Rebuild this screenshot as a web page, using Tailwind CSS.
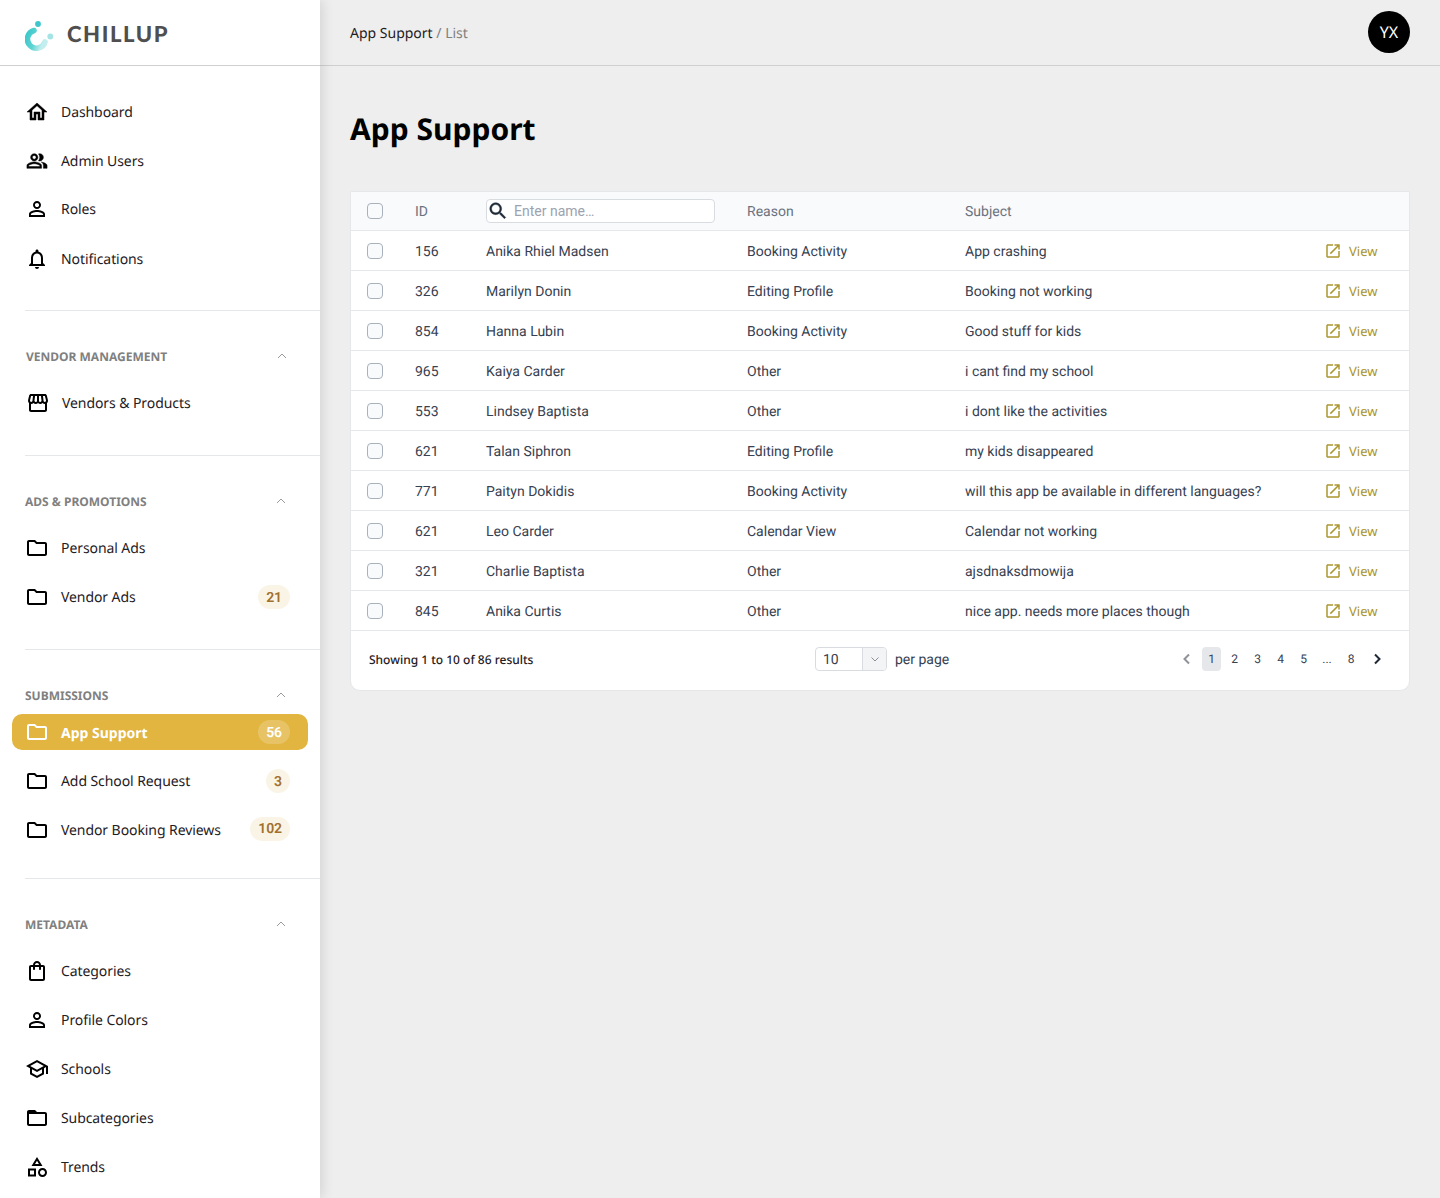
<!doctype html>
<html>
<head>
<meta charset="utf-8">
<script src="https://cdn.jsdelivr.net/npm/@tailwindcss/browser@4"></script>
<title>App Support</title>
</head>
<body class="bg-[#eeeeee] font-['Noto_Sans',sans-serif] [text-rendering:geometricPrecision]">
<div class="flex h-[1198px] w-[1440px] overflow-hidden">
<aside class="relative z-10 h-[1198px] w-[320px] shrink-0 bg-white shadow-[2px_0_12px_rgba(0,0,0,0.12)]">
  <div class="flex h-[66px] items-center border-b border-[#cfcfcf] pl-[25px]">
    <svg class="mt-[6px] h-[30px] w-[30px] shrink-0" viewBox="0 0 30 30">
      <defs><linearGradient id="lg" x1="0" y1="0" x2="1" y2="0.4"><stop offset="0" stop-color="#3cc8cb"/><stop offset="0.55" stop-color="#5fd3d3"/><stop offset="1" stop-color="#c4eeee"/></linearGradient></defs>
      <path d="M9 9.5 A 9 9 0 1 0 20 21" fill="none" stroke="url(#lg)" stroke-width="5.6" stroke-linecap="round"/>
      <circle cx="13" cy="3" r="2.9" fill="#3fc6cc"/>
      <circle cx="25.3" cy="15.5" r="2.9" fill="#a5e4e4"/>
    </svg>
    <span class="ml-[12px] mt-[2px] font-['Lato',sans-serif] text-[22px] font-black tracking-[1.6px] text-[#4f4f4f]">CHILLUP</span>
  </div>

  <nav class="pt-[21px] text-[14px] tracking-[-0.08px] text-[#1f2024] [&_a>span:nth-of-type(1)]:mt-[2px]">
    <a class="flex h-[49px] items-center pl-[25px]"><svg class="h-6 w-6 shrink-0 fill-black stroke-black stroke-[0.5]" viewBox="0 0 24 24"><path d="M12 5.69l5 4.5V18h-2v-6H9v6H7v-7.81l5-4.5M12 3L2 12h3v8h6v-6h2v6h6v-8h3L12 3z"/></svg><span class="ml-3">Dashboard</span></a>
    <a class="flex h-[49px] items-center pl-[26px]"><svg class="h-[22px] w-[22px] shrink-0 fill-black stroke-black stroke-[0.5]" viewBox="0 0 24 24"><path d="M16.67 13.13C18.04 14.06 19 15.32 19 17v3h4v-3c0-2.18-3.57-3.47-6.33-3.87zM15 12c2.21 0 4-1.79 4-4s-1.79-4-4-4c-.47 0-.91.1-1.33.26C14.5 5.27 15 6.58 15 8s-.5 2.73-1.33 3.74c.42.16.86.26 1.33.26zM9 12c2.21 0 4-1.79 4-4s-1.79-4-4-4-4 1.79-4 4 1.79 4 4 4zm0-6c1.1 0 2 .9 2 2s-.9 2-2 2-2-.9-2-2 .9-2 2-2zM9 13c-2.67 0-8 1.34-8 4v3h16v-3c0-2.66-5.33-4-8-4zm6 5H3v-.99C3.2 16.29 6.3 15 9 15s5.8 1.29 6 2v1z"/></svg><span class="ml-[13px]">Admin Users</span></a>
    <a class="flex h-[49px] items-center pb-[2px] pl-[25px]"><svg class="h-6 w-6 shrink-0 fill-black" viewBox="0 0 24 24"><path d="M12 5.9c1.16 0 2.1.94 2.1 2.1s-.94 2.1-2.1 2.1S9.9 9.16 9.9 8s.94-2.1 2.1-2.1m0 9c2.97 0 6.1 1.46 6.1 2.1v1.1H5.9V17c0-.64 3.13-2.1 6.1-2.1M12 4C9.79 4 8 5.79 8 8s1.79 4 4 4 4-1.79 4-4-1.79-4-4-4zm0 9c-2.67 0-8 1.34-8 4v3h16v-3c0-2.66-5.33-4-8-4z"/></svg><span class="ml-3">Roles</span></a>
    <a class="flex h-[49px] items-center pl-[25px]"><svg class="h-6 w-6 shrink-0 fill-black" viewBox="0 0 24 24"><path d="M12 22c1.1 0 2-.9 2-2h-4c0 1.1.9 2 2 2zm6-6v-5c0-3.07-1.63-5.64-4.5-6.32V4c0-.83-.67-1.5-1.5-1.5s-1.5.67-1.5 1.5v.68C7.64 5.36 6 7.92 6 11v5l-2 2v1h16v-1l-2-2zm-2 1H8v-6c0-2.48 1.51-4.5 4-4.5s4 2.02 4 4.5v6z"/></svg><span class="ml-3">Notifications</span></a>

    <div class="ml-[25px] mt-[27px] border-t border-[#e5e7eb]"></div>

    <div class="mt-[35px] flex h-5 items-center justify-between pl-[26px] pr-[32px]"><span class="mt-[2px] text-[12px] font-bold uppercase tracking-normal text-[#808080]">Vendor Management</span><svg class="h-3 w-3" viewBox="0 0 12 12" fill="none" stroke="#9a9a9a" stroke-width="1"><path d="M2 8l4-4 4 4"/></svg></div>
    <a class="mt-3 flex h-[49px] items-center pl-[26px]"><svg class="h-6 w-6 shrink-0 fill-black" viewBox="0 0 24 24"><path d="M21.9 8.89l-1.05-4.37c-.22-.9-1-1.52-1.91-1.52H5.05c-.9 0-1.69.63-1.9 1.52L2.1 8.89c-.24 1.02-.02 2.06.62 2.88.08.11.19.19.28.29V19c0 1.1.9 2 2 2h14c1.1 0 2-.9 2-2v-6.94c.09-.09.2-.18.28-.28.64-.82.87-1.87.62-2.89zm-2.99-3.9l1.05 4.37c.1.42.01.84-.25 1.17-.14.18-.44.47-.94.47-.61 0-1.14-.49-1.21-1.14L16.98 5l1.93-.01zM13 5h1.96l.54 4.52c.05.39-.07.78-.33 1.07-.22.26-.54.41-.95.41-.67 0-1.22-.59-1.22-1.31V5zM8.49 9.52L9.04 5H11v4.69c0 .72-.55 1.31-1.29 1.31-.34 0-.65-.15-.89-.41-.25-.29-.37-.68-.33-1.07zm-4.45-.16L5.05 5h1.97l-.58 4.86c-.08.65-.6 1.14-1.21 1.14-.49 0-.8-.29-.93-.47-.27-.32-.36-.75-.26-1.17zM5 19v-6.03c.08.01.15.03.23.03.87 0 1.66-.36 2.24-.95.6.6 1.4.95 2.31.95.87 0 1.65-.36 2.23-.93.59.57 1.39.93 2.29.93.84 0 1.64-.35 2.24-.95.58.59 1.37.95 2.24.95.08 0 .15-.02.23-.03V19H5z"/></svg><span class="ml-3">Vendors &amp; Products</span></a>

    <div class="ml-[25px] mt-[28px] border-t border-[#e5e7eb]"></div>

    <div class="mt-[35px] flex h-5 items-center justify-between pl-[25px] pr-[33px]"><span class="mt-[2px] text-[12px] font-bold uppercase tracking-normal text-[#808080]">Ads &amp; Promotions</span><svg class="h-3 w-3" viewBox="0 0 12 12" fill="none" stroke="#9a9a9a" stroke-width="1"><path d="M2 8l4-4 4 4"/></svg></div>
    <a class="mt-3 flex h-[49px] items-center pl-[25px]"><svg class="h-6 w-6 shrink-0 fill-black" viewBox="0 0 24 24"><path d="M9.17 6l2 2H20v10H4V6h5.17M10 4H4c-1.1 0-1.99.9-1.99 2L2 18c0 1.1.9 2 2 2h16c1.1 0 2-.9 2-2V8c0-1.1-.9-2-2-2h-8l-2-2z"/></svg><span class="ml-3">Personal Ads</span></a>
    <a class="flex h-[49px] items-center pl-[25px] pr-[30px]"><svg class="h-6 w-6 shrink-0 fill-black" viewBox="0 0 24 24"><path d="M9.17 6l2 2H20v10H4V6h5.17M10 4H4c-1.1 0-1.99.9-1.99 2L2 18c0 1.1.9 2 2 2h16c1.1 0 2-.9 2-2V8c0-1.1-.9-2-2-2h-8l-2-2z"/></svg><span class="ml-3">Vendor Ads</span><span class="ml-auto flex h-6 min-w-6 items-center justify-center rounded-full bg-[#faf4e6] px-2 pt-[4px] font-['Roboto',sans-serif] text-[14px] font-semibold text-[#a1702f]">21</span></a>

    <div class="ml-[25px] mt-[28px] border-t border-[#e5e7eb]"></div>

    <div class="mt-[35px] flex h-5 items-center justify-between pl-[25px] pr-[33px]"><span class="mt-[2px] text-[12px] font-bold uppercase tracking-normal text-[#808080]">Submissions</span><svg class="h-3 w-3" viewBox="0 0 12 12" fill="none" stroke="#9a9a9a" stroke-width="1"><path d="M2 8l4-4 4 4"/></svg></div>
    <div class="mt-[2px] flex h-[49px] items-center px-3">
      <a class="flex h-9 w-[296px] items-center rounded-[10px] bg-[#e1b53f] pl-[13px] pr-[18px]"><svg class="h-6 w-6 shrink-0 fill-white" viewBox="0 0 24 24"><path d="M9.17 6l2 2H20v10H4V6h5.17M10 4H4c-1.1 0-1.99.9-1.99 2L2 18c0 1.1.9 2 2 2h16c1.1 0 2-.9 2-2V8c0-1.1-.9-2-2-2h-8l-2-2z"/></svg><span class="ml-3 !mt-[4px] font-bold tracking-normal text-white">App Support</span><span class="ml-auto flex h-6 min-w-6 items-center justify-center rounded-full bg-white/20 px-2 pt-[4px] font-['Roboto',sans-serif] text-[14px] font-semibold text-white">56</span></a>
    </div>
    <a class="flex h-[49px] items-center pl-[25px] pr-[30px]"><svg class="h-6 w-6 shrink-0 fill-black" viewBox="0 0 24 24"><path d="M9.17 6l2 2H20v10H4V6h5.17M10 4H4c-1.1 0-1.99.9-1.99 2L2 18c0 1.1.9 2 2 2h16c1.1 0 2-.9 2-2V8c0-1.1-.9-2-2-2h-8l-2-2z"/></svg><span class="ml-3">Add School Request</span><span class="ml-auto flex h-6 min-w-6 items-center justify-center rounded-full bg-[#faf4e6] px-2 pt-[4px] font-['Roboto',sans-serif] text-[14px] font-semibold text-[#a1702f]">3</span></a>
    <a class="flex h-[49px] items-center pl-[25px] pr-[30px]"><svg class="h-6 w-6 shrink-0 fill-black" viewBox="0 0 24 24"><path d="M9.17 6l2 2H20v10H4V6h5.17M10 4H4c-1.1 0-1.99.9-1.99 2L2 18c0 1.1.9 2 2 2h16c1.1 0 2-.9 2-2V8c0-1.1-.9-2-2-2h-8l-2-2z"/></svg><span class="ml-3">Vendor Booking Reviews</span><span class="mb-[2px] ml-auto flex h-6 min-w-6 items-center justify-center rounded-full bg-[#faf4e6] px-2 pt-[2px] font-['Roboto',sans-serif] text-[14px] font-semibold text-[#a1702f]">102</span></a>

    <div class="ml-[25px] mt-[24px] border-t border-[#e5e7eb]"></div>

    <div class="mt-[35px] flex h-5 items-center justify-between pl-[25px] pr-[33px]"><span class="mt-[2px] text-[12px] font-bold uppercase tracking-normal text-[#808080]">Metadata</span><svg class="h-3 w-3" viewBox="0 0 12 12" fill="none" stroke="#9a9a9a" stroke-width="1"><path d="M2 8l4-4 4 4"/></svg></div>
    <a class="mt-3 flex h-[49px] items-center pl-[25px]"><svg class="h-6 w-6 shrink-0 fill-black" viewBox="0 0 24 24"><path d="M18 6h-2c0-2.21-1.79-4-4-4S8 3.79 8 6H6c-1.1 0-2 .9-2 2v12c0 1.1.9 2 2 2h12c1.1 0 2-.9 2-2V8c0-1.1-.9-2-2-2zm-6-2c1.1 0 2 .9 2 2h-4c0-1.1.9-2 2-2zm6 16H6V8h2v2c0 .55.45 1 1 1s1-.45 1-1V8h4v2c0 .55.45 1 1 1s1-.45 1-1V8h2v12z"/></svg><span class="ml-3">Categories</span></a>
    <a class="flex h-[49px] items-center pl-[25px]"><svg class="h-6 w-6 shrink-0 fill-black" viewBox="0 0 24 24"><path d="M12 5.9c1.16 0 2.1.94 2.1 2.1s-.94 2.1-2.1 2.1S9.9 9.16 9.9 8s.94-2.1 2.1-2.1m0 9c2.97 0 6.1 1.46 6.1 2.1v1.1H5.9V17c0-.64 3.13-2.1 6.1-2.1M12 4C9.79 4 8 5.79 8 8s1.79 4 4 4 4-1.79 4-4-1.79-4-4-4zm0 9c-2.67 0-8 1.34-8 4v3h16v-3c0-2.66-5.33-4-8-4z"/></svg><span class="ml-3">Profile Colors</span></a>
    <a class="flex h-[49px] items-center pl-[25px]"><svg class="h-6 w-6 shrink-0 fill-black" viewBox="0 0 24 24"><path d="M12 3L1 9l4 2.18v6L12 21l7-3.82v-6l2-1.09V17h2V9L12 3zm6.82 6L12 12.72 5.18 9 12 5.28 18.82 9zM17 15.99l-5 2.73-5-2.73v-3.72L12 15l5-2.73v3.72z"/></svg><span class="ml-3">Schools</span></a>
    <a class="flex h-[49px] items-center pl-[25px]"><svg class="h-6 w-6 shrink-0 fill-black" viewBox="0 0 24 24"><path d="M4 4h6l2 2h8c1.1 0 2 .9 2 2v10c0 1.1-.9 2-2 2H4c-1.1 0-2-.9-2-2V6c0-1.1.9-2 2-2zm0 4v10h16V8H4z"/></svg><span class="ml-3">Subcategories</span></a>
    <a class="flex h-[49px] items-center pl-[25px]"><svg class="h-6 w-6 shrink-0 fill-black" viewBox="0 0 24 24"><path d="M12 2l-5.5 9h11L12 2zm0 3.84L13.93 9h-3.87L12 5.84zM17.5 13c-2.49 0-4.5 2.01-4.5 4.5s2.01 4.5 4.5 4.5 4.5-2.01 4.5-4.5-2.01-4.5-4.5-4.5zm0 7c-1.38 0-2.5-1.12-2.5-2.5s1.12-2.5 2.5-2.5 2.5 1.12 2.5 2.5-1.12 2.5-2.5 2.5zM3 21.5h8v-8H3v8zm2-6h4v4H5v-4z"/></svg><span class="ml-3">Trends</span></a>
  </nav>
</aside>

<main class="min-w-0 flex-1">
  <header class="flex h-[66px] items-center justify-between border-b border-[#cfcfcf] pl-[30px] pr-[30px]">
    <div class="mt-[2px] text-[14px] text-[#1f2024]">App Support <span class="text-[#808080]">/ List</span></div>
    <div class="mb-[2px] flex h-[42px] w-[42px] items-center justify-center rounded-full bg-black text-[16px] text-white">YX</div>
  </header>
  <div class="px-[30px] pt-[42px]">
    <h1 class="text-[30px] font-bold leading-[42px] text-black">App Support</h1>
    <div class="mt-[41px] w-[1060px] overflow-hidden rounded-b-[10px] rounded-t-[2px] border border-[#e6e7ea] bg-white font-['Roboto',sans-serif] text-[14px] text-[#374151]">
      <table class="w-full table-fixed border-collapse">
        <colgroup><col class="w-[64px]"><col class="w-[71px]"><col class="w-[261px]"><col class="w-[218px]"><col><col class="w-[84px]"></colgroup>
        <thead>
          <tr class="h-[38px] border-b border-[#e5e7eb] bg-[#f9fafb] text-left text-[#6b7280]">
            <th class="pl-4 font-normal"><span class="block h-4 w-4 rounded-[4px] border border-[#a9b1bc] bg-[#f9fafb]"></span></th>
            <th class="pt-[4px] font-normal">ID</th>
            <th class="font-normal"><div class="flex h-6 w-[229px] items-center rounded-[4px] border border-[#d8dbe0] bg-white"><svg class="h-[22px] w-[22px] shrink-0 fill-[#1f2937] stroke-[#1f2937] stroke-[0.4]" viewBox="0 0 24 24"><path d="M15.5 14h-.79l-.28-.27C15.41 12.59 16 11.11 16 9.5 16 5.91 13.09 3 9.5 3S3 5.91 3 9.5 5.91 16 9.5 16c1.61 0 3.09-.59 4.23-1.57l.27.28v.79l5 4.99L20.49 19l-4.99-5zm-6 0C7.01 14 5 11.99 5 9.5S7.01 5 9.5 5 14 7.01 14 9.5 11.99 14 9.5 14z"/></svg><input class="ml-[5px] mt-[2px] w-[190px] bg-transparent text-[14px] font-normal outline-none placeholder:text-[#9ca3af]" placeholder="Enter name…"></div></th>
            <th class="pt-[4px] font-normal">Reason</th>
            <th class="pt-[4px] font-normal">Subject</th>
            <th></th>
          </tr>
        </thead>
        <tbody class="[&_td]:pt-px [&_td:not(:first-child,:last-child)]:pt-[5px]">
          <tr class="h-10 border-b border-[#e5e7eb]"><td class="pl-4"><span class="block h-4 w-4 rounded-[4px] border border-[#a9b1bc] bg-[#f9fafb]"></span></td><td>156</td><td>Anika Rhiel Madsen</td><td>Booking Activity</td><td>App crashing</td><td><a class="-ml-px flex items-center font-['Noto_Sans',sans-serif] text-[13px] text-[#a8952e]"><svg class="h-[18px] w-[18px] shrink-0 fill-[#ab972f]" viewBox="0 0 24 24"><path d="M19 19H5V5h7V3H5c-1.11 0-2 .9-2 2v14c0 1.1.89 2 2 2h14c1.1 0 2-.9 2-2v-7h-2v7zM14 3v2h3.59l-9.83 9.83 1.41 1.41L19 6.41V10h2V3h-7z"/></svg><span class="ml-[7px] mt-[2px]">View</span></a></td></tr>
          <tr class="h-10 border-b border-[#e5e7eb]"><td class="pl-4"><span class="block h-4 w-4 rounded-[4px] border border-[#a9b1bc] bg-[#f9fafb]"></span></td><td>326</td><td>Marilyn Donin</td><td>Editing Profile</td><td>Booking not working</td><td><a class="-ml-px flex items-center font-['Noto_Sans',sans-serif] text-[13px] text-[#a8952e]"><svg class="h-[18px] w-[18px] shrink-0 fill-[#ab972f]" viewBox="0 0 24 24"><path d="M19 19H5V5h7V3H5c-1.11 0-2 .9-2 2v14c0 1.1.89 2 2 2h14c1.1 0 2-.9 2-2v-7h-2v7zM14 3v2h3.59l-9.83 9.83 1.41 1.41L19 6.41V10h2V3h-7z"/></svg><span class="ml-[7px] mt-[2px]">View</span></a></td></tr>
          <tr class="h-10 border-b border-[#e5e7eb]"><td class="pl-4"><span class="block h-4 w-4 rounded-[4px] border border-[#a9b1bc] bg-[#f9fafb]"></span></td><td>854</td><td>Hanna Lubin</td><td>Booking Activity</td><td>Good stuff for kids</td><td><a class="-ml-px flex items-center font-['Noto_Sans',sans-serif] text-[13px] text-[#a8952e]"><svg class="h-[18px] w-[18px] shrink-0 fill-[#ab972f]" viewBox="0 0 24 24"><path d="M19 19H5V5h7V3H5c-1.11 0-2 .9-2 2v14c0 1.1.89 2 2 2h14c1.1 0 2-.9 2-2v-7h-2v7zM14 3v2h3.59l-9.83 9.83 1.41 1.41L19 6.41V10h2V3h-7z"/></svg><span class="ml-[7px] mt-[2px]">View</span></a></td></tr>
          <tr class="h-10 border-b border-[#e5e7eb]"><td class="pl-4"><span class="block h-4 w-4 rounded-[4px] border border-[#a9b1bc] bg-[#f9fafb]"></span></td><td>965</td><td>Kaiya Carder</td><td>Other</td><td>i cant find my school</td><td><a class="-ml-px flex items-center font-['Noto_Sans',sans-serif] text-[13px] text-[#a8952e]"><svg class="h-[18px] w-[18px] shrink-0 fill-[#ab972f]" viewBox="0 0 24 24"><path d="M19 19H5V5h7V3H5c-1.11 0-2 .9-2 2v14c0 1.1.89 2 2 2h14c1.1 0 2-.9 2-2v-7h-2v7zM14 3v2h3.59l-9.83 9.83 1.41 1.41L19 6.41V10h2V3h-7z"/></svg><span class="ml-[7px] mt-[2px]">View</span></a></td></tr>
          <tr class="h-10 border-b border-[#e5e7eb]"><td class="pl-4"><span class="block h-4 w-4 rounded-[4px] border border-[#a9b1bc] bg-[#f9fafb]"></span></td><td>553</td><td>Lindsey Baptista</td><td>Other</td><td>i dont like the activities</td><td><a class="-ml-px flex items-center font-['Noto_Sans',sans-serif] text-[13px] text-[#a8952e]"><svg class="h-[18px] w-[18px] shrink-0 fill-[#ab972f]" viewBox="0 0 24 24"><path d="M19 19H5V5h7V3H5c-1.11 0-2 .9-2 2v14c0 1.1.89 2 2 2h14c1.1 0 2-.9 2-2v-7h-2v7zM14 3v2h3.59l-9.83 9.83 1.41 1.41L19 6.41V10h2V3h-7z"/></svg><span class="ml-[7px] mt-[2px]">View</span></a></td></tr>
          <tr class="h-10 border-b border-[#e5e7eb]"><td class="pl-4"><span class="block h-4 w-4 rounded-[4px] border border-[#a9b1bc] bg-[#f9fafb]"></span></td><td>621</td><td>Talan Siphron</td><td>Editing Profile</td><td>my kids disappeared</td><td><a class="-ml-px flex items-center font-['Noto_Sans',sans-serif] text-[13px] text-[#a8952e]"><svg class="h-[18px] w-[18px] shrink-0 fill-[#ab972f]" viewBox="0 0 24 24"><path d="M19 19H5V5h7V3H5c-1.11 0-2 .9-2 2v14c0 1.1.89 2 2 2h14c1.1 0 2-.9 2-2v-7h-2v7zM14 3v2h3.59l-9.83 9.83 1.41 1.41L19 6.41V10h2V3h-7z"/></svg><span class="ml-[7px] mt-[2px]">View</span></a></td></tr>
          <tr class="h-10 border-b border-[#e5e7eb]"><td class="pl-4"><span class="block h-4 w-4 rounded-[4px] border border-[#a9b1bc] bg-[#f9fafb]"></span></td><td>771</td><td>Paityn Dokidis</td><td>Booking Activity</td><td>will this app be available in different languages?</td><td><a class="-ml-px flex items-center font-['Noto_Sans',sans-serif] text-[13px] text-[#a8952e]"><svg class="h-[18px] w-[18px] shrink-0 fill-[#ab972f]" viewBox="0 0 24 24"><path d="M19 19H5V5h7V3H5c-1.11 0-2 .9-2 2v14c0 1.1.89 2 2 2h14c1.1 0 2-.9 2-2v-7h-2v7zM14 3v2h3.59l-9.83 9.83 1.41 1.41L19 6.41V10h2V3h-7z"/></svg><span class="ml-[7px] mt-[2px]">View</span></a></td></tr>
          <tr class="h-10 border-b border-[#e5e7eb]"><td class="pl-4"><span class="block h-4 w-4 rounded-[4px] border border-[#a9b1bc] bg-[#f9fafb]"></span></td><td>621</td><td>Leo Carder</td><td>Calendar View</td><td>Calendar not working</td><td><a class="-ml-px flex items-center font-['Noto_Sans',sans-serif] text-[13px] text-[#a8952e]"><svg class="h-[18px] w-[18px] shrink-0 fill-[#ab972f]" viewBox="0 0 24 24"><path d="M19 19H5V5h7V3H5c-1.11 0-2 .9-2 2v14c0 1.1.89 2 2 2h14c1.1 0 2-.9 2-2v-7h-2v7zM14 3v2h3.59l-9.83 9.83 1.41 1.41L19 6.41V10h2V3h-7z"/></svg><span class="ml-[7px] mt-[2px]">View</span></a></td></tr>
          <tr class="h-10 border-b border-[#e5e7eb]"><td class="pl-4"><span class="block h-4 w-4 rounded-[4px] border border-[#a9b1bc] bg-[#f9fafb]"></span></td><td>321</td><td>Charlie Baptista</td><td>Other</td><td>ajsdnaksdmowija</td><td><a class="-ml-px flex items-center font-['Noto_Sans',sans-serif] text-[13px] text-[#a8952e]"><svg class="h-[18px] w-[18px] shrink-0 fill-[#ab972f]" viewBox="0 0 24 24"><path d="M19 19H5V5h7V3H5c-1.11 0-2 .9-2 2v14c0 1.1.89 2 2 2h14c1.1 0 2-.9 2-2v-7h-2v7zM14 3v2h3.59l-9.83 9.83 1.41 1.41L19 6.41V10h2V3h-7z"/></svg><span class="ml-[7px] mt-[2px]">View</span></a></td></tr>
          <tr class="h-10 border-b border-[#e5e7eb]"><td class="pl-4"><span class="block h-4 w-4 rounded-[4px] border border-[#a9b1bc] bg-[#f9fafb]"></span></td><td>845</td><td>Anika Curtis</td><td>Other</td><td>nice app. needs more places though</td><td><a class="-ml-px flex items-center font-['Noto_Sans',sans-serif] text-[13px] text-[#a8952e]"><svg class="h-[18px] w-[18px] shrink-0 fill-[#ab972f]" viewBox="0 0 24 24"><path d="M19 19H5V5h7V3H5c-1.11 0-2 .9-2 2v14c0 1.1.89 2 2 2h14c1.1 0 2-.9 2-2v-7h-2v7zM14 3v2h3.59l-9.83 9.83 1.41 1.41L19 6.41V10h2V3h-7z"/></svg><span class="ml-[7px] mt-[2px]">View</span></a></td></tr>
        </tbody>
      </table>
      <div class="flex h-[59px] items-center pb-[2px] pl-[18px] pr-[23px]">
        <div class="mt-[2px] w-[446px] font-['Noto_Sans',sans-serif] text-[12px] font-medium text-[#1f2024]">Showing 1 to 10 of 86 results</div>
        <div class="flex h-6 w-[72px] overflow-hidden rounded-[4px] border border-[#d8dbe0] text-[14px]"><span class="flex w-[46px] items-center pl-[7px] pt-[2px]">10</span><span class="flex flex-1 items-center justify-center border-l border-[#d8dbe0] bg-[#f3f4f6]"><svg class="h-[10px] w-[10px]" viewBox="0 0 10 10" fill="none" stroke="#8b8f96" stroke-width="1"><path d="M1.5 3.5L5 7l3.5-3.5"/></svg></span></div>
        <span class="ml-2 mt-[2px] text-[14px]">per page</span>
        <div class="ml-auto flex items-center text-[12px] text-[#374151]">
          <svg class="mr-[6px] h-[18px] w-[18px]" viewBox="0 0 18 18" fill="none" stroke="#8f9399" stroke-width="2"><path d="M11 4.5L6.5 9l4.5 4.5"/></svg>
          <span class="flex h-6 w-[19px] items-center justify-center rounded-[4px] bg-[#e5e7eb]">1</span>
          <span class="w-[27px] text-center">2</span>
          <span class="w-[19px] text-center">3</span>
          <span class="w-[27px] text-center">4</span>
          <span class="w-[19px] text-center">5</span>
          <span class="w-[28px] text-center">...</span>
          <span class="w-[20px] text-center">8</span>
          <svg class="ml-[7px] h-[18px] w-[18px]" viewBox="0 0 18 18" fill="none" stroke="#1f2937" stroke-width="2"><path d="M7 4.5L11.5 9 7 13.5"/></svg>
        </div>
      </div>
    </div>
  </div>
</main>
</div>
</body>
</html>
